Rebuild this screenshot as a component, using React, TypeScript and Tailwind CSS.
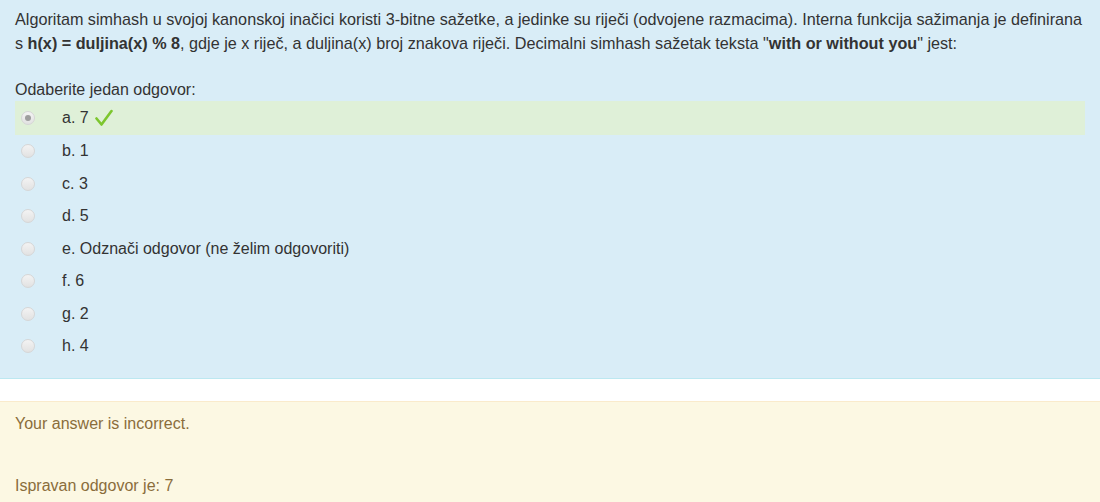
import React from 'react'

const options = [
  { key: 'a', text: '7', checked: true, correct: true },
  { key: 'b', text: '1' },
  { key: 'c', text: '3' },
  { key: 'd', text: '5' },
  { key: 'e', text: 'Odznači odgovor (ne želim odgovoriti)' },
  { key: 'f', text: '6' },
  { key: 'g', text: '2' },
  { key: 'h', text: '4' },
]

function Radio({ checked }: { checked?: boolean }) {
  return (
    <span className="flex h-[14px] w-[14px] items-center justify-center rounded-full border border-[#d6d6d6] bg-gradient-to-b from-[#f3f3f3] to-[#e2e2e2]">
      {checked && <span className="h-[6px] w-[6px] rounded-full bg-[#9e9e9e]" />}
    </span>
  )
}

function Check() {
  return (
    <svg width="18" height="18" viewBox="0 0 18 18" className="ml-[6px]">
      <path d="M1.5 9.5 L6.5 15.5 L16.5 2" fill="none" stroke="#7dc62e" strokeWidth="2.6" strokeLinecap="round" strokeLinejoin="round" />
    </svg>
  )
}

export default function App() {
  return (
    <div className="w-[1100px] bg-white font-['Liberation_Sans',Arial,sans-serif] text-[16px] leading-[24px]">
      {/* question box */}
      <div className="border-b border-[#bce8f1] bg-[#d9edf7] px-[15px] pt-[7px] pb-[15px] text-[#333333]">
        <p className="text-[16.2px]">
          Algoritam simhash u svojoj kanonskoj inačici koristi 3-bitne sažetke, a jedinke su riječi (odvojene razmacima). Interna funkcija sažimanja je definirana s{' '}
          <strong>h(x) = duljina(x) % 8</strong>, gdje je x riječ, a duljina(x) broj znakova riječi. Decimalni simhash sažetak teksta "<strong>with or without you</strong>" jest:
        </p>
        <div className="mt-[24px] leading-[22px]">Odaberite jedan odgovor:</div>
        <div className="flex flex-col">
          {options.map((o) => (
            <div
              key={o.key}
              className={
                o.correct
                  ? 'flex h-[34px] items-center bg-[#dff0d8]'
                  : 'flex h-[32.5px] items-center'
              }
            >
              <span className="ml-[6px] w-[41px]">
                <Radio checked={o.checked} />
              </span>
              <span>
                {o.key}. {o.text}
              </span>
              {o.correct && <Check />}
            </div>
          ))}
        </div>
      </div>

      {/* feedback box */}
      <div className="mt-[22px] border-t border-[#faebcc] bg-[#fcf8e3] px-[15px] pt-[10px] pb-[7px] text-[#8a6d3b]">
        <div>Your answer is incorrect.</div>
        <div className="mt-[38px]">Ispravan odgovor je: 7</div>
      </div>
    </div>
  )
}
